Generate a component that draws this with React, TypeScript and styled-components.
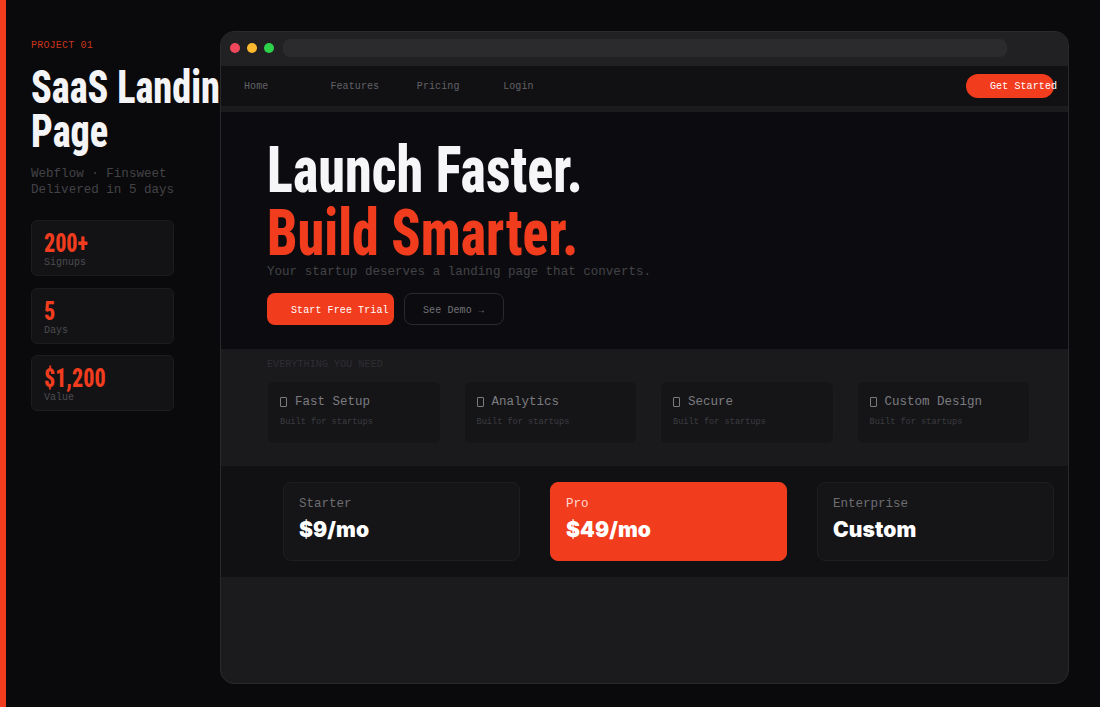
import styled, { createGlobalStyle } from "styled-components";

const mono = `"Liberation Mono", "DejaVu Sans Mono", monospace`;
const condensed = `Roboto, "Liberation Sans", sans-serif`;
const orange = "#f23c1e";

const GlobalStyle = createGlobalStyle`
	html, body {
		margin: 0;
		padding: 0;
		background: #0a0a0c;
	}
	* {
		box-sizing: border-box;
	}
`;

const Page = styled.div`
	display: flex;
	width: 100vw;
	height: 100vh;
	overflow: hidden;
	background: #0a0a0c;
	border-left: 6px solid ${orange};
`;

const Sidebar = styled.aside`
	flex: 0 0 214px;
	overflow: hidden;
	padding: 40px 0 0 25px;
`;

const Eyebrow = styled.div`
	font: 10px/12px ${mono};
	letter-spacing: 0.2px;
	color: #c9351b;
`;

const ProjectTitle = styled.h1`
	margin: 13px 0 0;
	font: 800 46px/44px ${condensed};
	font-stretch: 75%;
	white-space: nowrap;
	color: #f4f4f6;
	transform: scaleX(0.83);
	transform-origin: left;
`;

const Meta = styled.p`
	margin: 13px 0 0;
	font: 12.55px/16px ${mono};
	color: #434347;
`;

const Stats = styled.div`
	display: flex;
	flex-direction: column;
	gap: 11.5px;
	width: 143px;
	margin-top: 22px;
`;

const Stat = styled.div`
	height: 56px;
	padding: 9px 12px;
	background: #131316;
	border: 1px solid #1d1d20;
	border-radius: 6px;
`;

const StatValue = styled.div`
	font: 800 25px/27px ${condensed};
	font-stretch: 75%;
	color: ${orange};
	transform: scaleX(0.88);
	transform-origin: left;
`;

const StatLabel = styled.div`
	font: 10px/11px ${mono};
	color: #4c4c50;
`;

const Frame = styled.main`
	flex: 0 0 849px;
	display: flex;
	flex-direction: column;
	margin: 31px 0 23px;
	background: #1b1b1e;
	border: 1px solid #2a2a2d;
	border-radius: 14px;
	overflow: hidden;
`;

const TitleBar = styled.div`
	display: flex;
	align-items: center;
	gap: 7px;
	height: 34px;
	padding: 0 9px 3px;
	background: #212124;
`;

const Dot = styled.span<{ $color: string }>`
	width: 10px;
	height: 10px;
	border-radius: 50%;
	background: ${(p) => p.$color};
`;

const AddressBar = styled.div`
	flex: 0 0 724px;
	height: 18px;
	margin-left: 2px;
	background: #2b2b2e;
	border-radius: 7px;
`;

const Nav = styled.nav`
	display: flex;
	align-items: center;
	height: 40px;
	padding: 0 14px 0 23px;
	background: #111114;
`;

const NavLink = styled.a`
	flex: 0 0 86.4px;
	margin-top: 2px;
	font: 10px/12px ${mono};
	letter-spacing: 0.1px;
	color: #626266;
`;

const NavButton = styled.button`
	width: 88px;
	height: 24px;
	margin-left: auto;
	padding: 2px 0 0 24px;
	border: 0;
	border-radius: 12px;
	background: ${orange};
	color: #fff;
	font: 10px/12px ${mono};
	letter-spacing: 0.1px;
	text-align: left;
	white-space: nowrap;
`;

const Hero = styled.section`
	height: 237px;
	margin-top: 6px;
	padding: 27px 0 0 46px;
	background: #0c0c10;
`;

const Headline = styled.h2<{ $accent?: boolean }>`
	margin: 0;
	font: 800 64px/63px ${condensed};
	font-stretch: 75%;
	white-space: nowrap;
	color: ${(p) => (p.$accent ? orange : "#f6f6f8")};
	transform: scaleX(0.845);
	transform-origin: left;
`;

const Tagline = styled.p`
	margin: -1px 0 0;
	font: 12.55px/16px ${mono};
	color: #434347;
`;

const HeroActions = styled.div`
	display: flex;
	gap: 10px;
	margin-top: 13px;
`;

const PrimaryButton = styled.button`
	width: 127px;
	height: 32px;
	padding: 4px 0 0 24px;
	border: 0;
	border-radius: 8px;
	background: ${orange};
	color: #fff;
	font: 10px/12px ${mono};
	letter-spacing: 0.1px;
	text-align: left;
	white-space: nowrap;
`;

const GhostButton = styled.button`
	width: 100px;
	height: 32px;
	padding: 4px 0 0 18px;
	border: 1px solid #2a2a2d;
	border-radius: 8px;
	background: transparent;
	color: #727276;
	font: 10px/12px ${mono};
	letter-spacing: 0.1px;
	text-align: left;
	white-space: nowrap;
`;

const Features = styled.section`
	height: 117px;
	padding: 10px 38px 0 46px;
	background: #1a1a1d;
`;

const FeaturesLabel = styled.div`
	font: 10px/12px ${mono};
	letter-spacing: 0.1px;
	color: #2e2e32;
`;

const FeatureGrid = styled.div`
	display: grid;
	grid-template-columns: repeat(4, 1fr);
	gap: 23px;
	margin-top: 10px;
`;

const FeatureCard = styled.div`
	height: 63px;
	padding: 13px 12px;
	background: #151518;
	border: 1px solid #1b1b1e;
	border-radius: 7px;
`;

const FeatureTitle = styled.div`
	display: flex;
	align-items: center;
	font: 12.5px/14px ${mono};
	color: #7c7c80;
	white-space: nowrap;
`;

const Tofu = styled.span`
	width: 7px;
	height: 10px;
	margin-right: 8px;
	border: 1px solid #7c7c80;
	border-radius: 1px;
`;

const FeatureText = styled.div`
	margin-top: 8px;
	font: 8.6px/11px ${mono};
	color: #3c3c40;
`;

const Pricing = styled.section`
	display: grid;
	grid-template-columns: repeat(3, 1fr);
	gap: 30px;
	height: 111px;
	padding: 16px 14px 16px 62px;
	background: #111113;
`;

const PriceCard = styled.div<{ $featured?: boolean }>`
	padding: 14px 15px;
	background: ${(p) => (p.$featured ? orange : "#151518")};
	border: 1px solid ${(p) => (p.$featured ? orange : "#1e1e21")};
	border-radius: 8px;
`;

const PlanName = styled.div<{ $featured?: boolean }>`
	font: 12.5px/14px ${mono};
	color: ${(p) => (p.$featured ? "#ffd9d0" : "#6e6e72")};
`;

const PlanPrice = styled.div`
	margin-top: 6px;
	font: 900 21px/26px Inter, "Liberation Sans", sans-serif;
	letter-spacing: 0.1px;
	color: #fff;
`;

const stats = [
	{ value: "200+", label: "Signups" },
	{ value: "5", label: "Days" },
	{ value: "$1,200", label: "Value" },
];

const features = ["Fast Setup", "Analytics", "Secure", "Custom Design"];

const plans = [
	{ name: "Starter", price: "$9/mo" },
	{ name: "Pro", price: "$49/mo", featured: true },
	{ name: "Enterprise", price: "Custom" },
];

export default function App() {
	return (
		<Page>
			<GlobalStyle />
			<Sidebar>
				<Eyebrow>PROJECT 01</Eyebrow>
				<ProjectTitle>
					SaaS Landing
					<br />
					Page
				</ProjectTitle>
				<Meta>
					Webflow · Finsweet
					<br />
					Delivered in 5 days
				</Meta>
				<Stats>
					{stats.map((s) => (
						<Stat key={s.label}>
							<StatValue>{s.value}</StatValue>
							<StatLabel>{s.label}</StatLabel>
						</Stat>
					))}
				</Stats>
			</Sidebar>
			<Frame>
				<TitleBar>
					<Dot $color="#f0475a" />
					<Dot $color="#fdb92e" />
					<Dot $color="#2ed14a" />
					<AddressBar />
				</TitleBar>
				<Nav>
					<NavLink>Home</NavLink>
					<NavLink>Features</NavLink>
					<NavLink>Pricing</NavLink>
					<NavLink>Login</NavLink>
					<NavButton>Get Started</NavButton>
				</Nav>
				<Hero>
					<Headline>Launch Faster.</Headline>
					<Headline $accent>Build Smarter.</Headline>
					<Tagline>Your startup deserves a landing page that converts.</Tagline>
					<HeroActions>
						<PrimaryButton>Start Free Trial</PrimaryButton>
						<GhostButton>See Demo →</GhostButton>
					</HeroActions>
				</Hero>
				<Features>
					<FeaturesLabel>EVERYTHING YOU NEED</FeaturesLabel>
					<FeatureGrid>
						{features.map((f) => (
							<FeatureCard key={f}>
								<FeatureTitle>
									<Tofu />
									{f}
								</FeatureTitle>
								<FeatureText>Built for startups</FeatureText>
							</FeatureCard>
						))}
					</FeatureGrid>
				</Features>
				<Pricing>
					{plans.map((p) => (
						<PriceCard key={p.name} $featured={p.featured}>
							<PlanName $featured={p.featured}>{p.name}</PlanName>
							<PlanPrice>{p.price}</PlanPrice>
						</PriceCard>
					))}
				</Pricing>
			</Frame>
		</Page>
	);
}
